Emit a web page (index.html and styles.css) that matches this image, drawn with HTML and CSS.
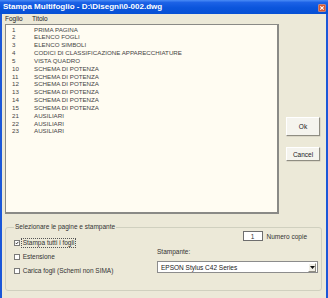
FILE: index.html
```html
<!DOCTYPE html>
<html>
<head>
<meta charset="utf-8">
<link rel="stylesheet" href="styles.css">
</head>
<body>
<div class="window">
  <div class="titlebar">
    <span class="title">Stampa Multifoglio - D:\Disegni\0-002.dwg</span>
    <span class="close"><svg width="8" height="8" viewBox="0 0 8 8"><rect x="0.25" y="0.25" width="7.5" height="7.5" rx="1.5" fill="#D9592E" stroke="#F4C9B8" stroke-width="0.5"/><path d="M2.3 2.3 L5.7 5.7 M5.7 2.3 L2.3 5.7" stroke="#fff" stroke-width="1.1"/></svg></span>
  </div>
  <div class="client">
    <div class="top">
      <div class="listarea">
        <div class="listhead"><span class="c1">Foglio</span><span>Titolo</span></div>
        <div class="list">
          <div class="row"><span class="num">1</span><span>PRIMA PAGINA</span></div>
          <div class="row"><span class="num">2</span><span>ELENCO FOGLI</span></div>
          <div class="row"><span class="num">3</span><span>ELENCO SIMBOLI</span></div>
          <div class="row"><span class="num">4</span><span>CODICI DI CLASSIFICAZIONE APPARECCHIATURE</span></div>
          <div class="row"><span class="num">5</span><span>VISTA QUADRO</span></div>
          <div class="row"><span class="num">10</span><span>SCHEMA DI POTENZA</span></div>
          <div class="row"><span class="num">11</span><span>SCHEMA DI POTENZA</span></div>
          <div class="row"><span class="num">12</span><span>SCHEMA DI POTENZA</span></div>
          <div class="row"><span class="num">13</span><span>SCHEMA DI POTENZA</span></div>
          <div class="row"><span class="num">14</span><span>SCHEMA DI POTENZA</span></div>
          <div class="row"><span class="num">15</span><span>SCHEMA DI POTENZA</span></div>
          <div class="row"><span class="num">21</span><span>AUSILIARI</span></div>
          <div class="row"><span class="num">22</span><span>AUSILIARI</span></div>
          <div class="row"><span class="num">23</span><span>AUSILIARI</span></div>
        </div>
      </div>
      <div class="buttons">
        <div class="btn ok">Ok</div>
        <div class="btn cancel">Cancel</div>
      </div>
    </div>
    <fieldset class="group">
      <legend>Selezionare le pagine e stampante</legend>
      <div class="groupgrid">
        <div class="checks">
          <div class="chk"><span class="box"><svg width="6" height="6" viewBox="0 0 6 6"><path d="M1 2.8 L2.4 4.3 L5 1.3" fill="none" stroke="#1a1a1a" stroke-width="1.3"/></svg></span><span class="lbl focus">Stampa tutti i fogli</span></div>
          <div class="chk"><span class="box"></span><span class="lbl">Estensione</span></div>
          <div class="chk"><span class="box"></span><span class="lbl">Carica fogli (Schemi non SIMA)</span></div>
        </div>
        <div class="printer">
          <div class="copies"><span class="copyinput">1</span><span>Numero copie</span></div>
          <div class="stlabel">Stampante:</div>
          <div class="combo"><span class="ctext">EPSON Stylus C42 Series</span><span class="arrow"><svg width="5" height="3" viewBox="0 0 5 3"><path d="M0 0 H5 L2.5 3 Z" fill="#111"/></svg></span></div>
        </div>
      </div>
    </fieldset>
  </div>
</div>
</body>
</html>
```

FILE: styles.css
```css
* { box-sizing: border-box; }
html, body { margin: 0; padding: 0; background: #ECE9D8; }
body { font-family: "Liberation Sans", Arial, sans-serif; color: #222; }

.window { width: 328px; height: 298px; background: #ECE9D8; overflow: hidden; }

.titlebar {
  height: 14px;
  display: flex;
  align-items: center;
  justify-content: space-between;
  padding: 0 2px 0 3px;
  background: linear-gradient(#4A8CF6 0%, #1C62E6 18%, #0B55DC 55%, #0650D4 100%);
}
.title { color: #fff; font-weight: bold; font-size: 8px; line-height: 14px; white-space: nowrap; }
.close { width: 8px; height: 8px; display: flex; margin-top: 1px; }

.client {
  height: 284px;
  border-left: 2px solid #1B57D8;
  border-right: 2px solid #1B57D8;
  padding: 0 4px 0 3px;
}

.top { display: flex; gap: 7px; }
.listarea { width: 274px; }
.listhead { height: 10px; line-height: 10px; font-size: 6.5px; display: flex; color: #222; }
.listhead .c1 { width: 27px; }

.list {
  height: 190px;
  background: #FFFCF2;
  border: 1px solid #8A8A86;
  border-right-width: 2px;
  border-bottom-width: 2px;
  padding-top: 0.5px;
}
.row { display: flex; height: 7.85px; line-height: 7.85px; font-size: 6.2px; color: #444; padding-left: 6px; white-space: nowrap; }
.num { width: 22px; flex: none; }

.buttons { width: 34px; display: flex; flex-direction: column; padding-top: 103px; gap: 11px; }
.btn {
  display: flex; align-items: center; justify-content: center;
  font-size: 6.5px; color: #222;
  background: #F5F4EE;
  border: 1px solid;
  border-color: #FFFFFF #8F8D82 #8F8D82 #FFFFFF;
  box-shadow: 0.5px 0.5px 0 #C9C6B6;
}
.ok { height: 19px; }
.cancel { height: 14px; }

.group {
  margin: 9px 0 0 0;
  padding: 0 3px 13px 8px;
  border: 1px solid #D0D0BF;
  border-radius: 3px;
  min-width: 0;
}
.group legend { padding: 0 1px; font-size: 6.5px; line-height: 8px; color: #333; }

.groupgrid { display: flex; height: 46px; }
.checks { width: 143px; padding-top: 4.5px; }
.chk { height: 14px; display: flex; align-items: center; font-size: 6.5px; color: #333; }
.box { width: 6px; height: 6px; border: 1px solid #7A7A78; background: #fff; flex: none; display: flex; align-items: center; justify-content: center; }
.box svg { display: block; }
.lbl { margin-left: 0.7px; padding: 0 1px; border: 1px dotted transparent; line-height: 8px; white-space: nowrap; }
.lbl.focus { border-color: #555; }

.printer { flex: 1; display: flex; flex-direction: column; font-size: 6.5px; color: #333; }
.copies { height: 10px; display: flex; justify-content: flex-end; align-items: center; gap: 4px; padding-right: 11px; }
.copyinput { width: 20px; height: 10px; border: 1px solid #6E6E6E; background: #fff; display: flex; align-items: center; justify-content: center; }
.stlabel { margin-top: 7px; line-height: 8px; }
.combo {
  margin-top: 5px; height: 12px;
  border: 1px solid #8C8C8C;
  background: #fff;
  display: flex; align-items: center; justify-content: space-between;
  padding: 0 1px 0 3px;
}
.ctext { white-space: nowrap; color: #1a1a1a; }
.arrow {
  width: 8px; height: 9px;
  background: #F1EFE6;
  border: 1px solid; border-color: #fff #8F8D82 #8F8D82 #fff;
  display: flex; align-items: center; justify-content: center;
}
.arrow svg { display: block; }
```
